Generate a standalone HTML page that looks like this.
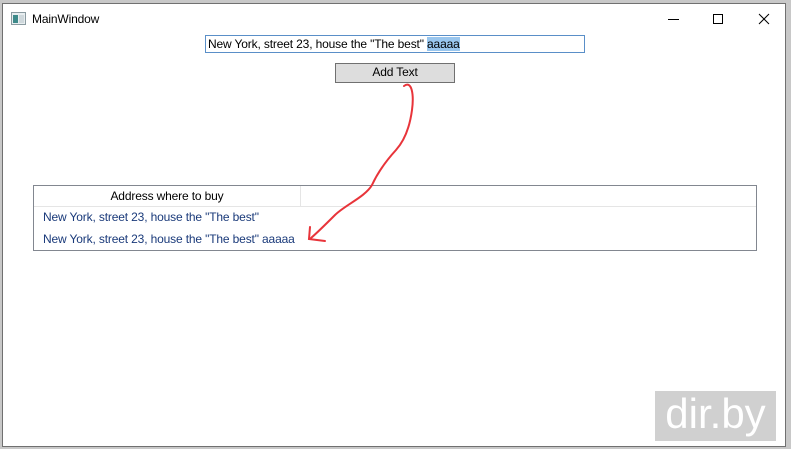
<!DOCTYPE html>
<html><head><meta charset="utf-8"><style>
body{margin:0;width:791px;height:449px;background:#c8c8c8;position:relative;overflow:hidden;font-family:"Liberation Sans",sans-serif;font-size:12px;color:#000;letter-spacing:-0.15px}
.win{position:absolute;left:2px;top:3px;width:782px;height:442px;background:#fff;border:1px solid #707070}
.abs{position:absolute}
</style></head><body>
<div class="win"></div>
<svg class="abs" style="left:11px;top:12px" width="15" height="13"><rect x="0.5" y="0.5" width="14" height="12" fill="#e8eef0" stroke="#8a9aa0"/><rect x="2" y="3" width="5" height="8" fill="#3e8a8a"/><rect x="8" y="3" width="5" height="8" fill="#cfd8dc"/></svg>
<div class="abs" style="left:32px;top:12px;font-size:12px">MainWindow</div>
<svg class="abs" style="left:660px;top:10px" width="120" height="20" stroke="#000" stroke-width="1" fill="none">
<line x1="8" y1="9.5" x2="19" y2="9.5"/>
<rect x="53.5" y="4.5" width="9" height="9"/>
<line x1="99" y1="4" x2="109" y2="14"/><line x1="109" y1="4" x2="99" y2="14"/>
</svg>
<div class="abs" style="left:205px;top:35px;width:378px;height:16px;border:1px solid #5a8fc8;background:#fff"></div>
<div class="abs" style="left:208px;top:37px;font-size:12px;white-space:nowrap">New York, street 23, house the "The best" <span style="background:#99c6ee">aaaaa</span></div>
<div class="abs" style="left:335px;top:63px;width:118px;height:18px;border:1px solid #707070;background:#dddddd;text-align:center;line-height:17px">Add Text</div>
<div class="abs" style="left:33px;top:185px;width:722px;height:64px;border:1px solid #828790;background:#fff"></div>
<div class="abs" style="left:34px;top:206px;width:722px;height:1px;background:#e5e5e5"></div>
<div class="abs" style="left:300px;top:186px;width:1px;height:20px;background:#e5e5e5"></div>
<div class="abs" style="left:34px;top:189px;width:266px;text-align:center">Address where to buy</div>
<div class="abs" style="left:43px;top:210px;color:#1a3a7a;white-space:nowrap">New York, street 23, house the "The best"</div>
<div class="abs" style="left:43px;top:232px;color:#1a3a7a;white-space:nowrap">New York, street 23, house the "The best" aaaaa</div>
<svg class="abs" style="left:0;top:0" width="791" height="449" fill="none" stroke="#e8343a" stroke-width="2" stroke-linecap="round">
<path d="M404 86 C412 80 414 95 412 110 C410 125 405 140 396 150 C385 162 378 172 372 185 C365 197 345 205 335 215 C325 225 318 232 311 238"/>
<path d="M310 227 L309 239 L325 241"/>
</svg>
<div class="abs" style="left:655px;top:391px;width:121px;height:50px;background:#d0d0d0;color:#fff;font-size:42px;line-height:46px;text-align:center;letter-spacing:0">dir.by</div>
</body></html>
